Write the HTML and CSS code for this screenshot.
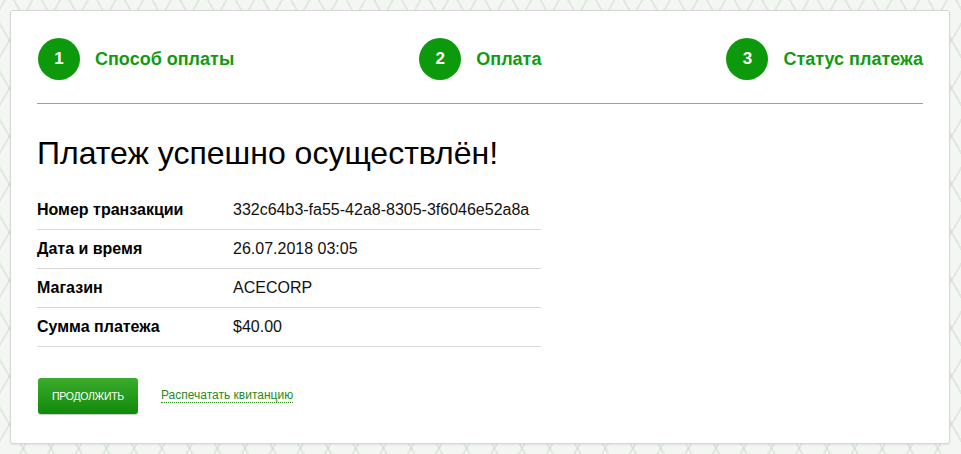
FILE: index.html
```html
<!DOCTYPE html>
<html lang="ru">
<head>
    <meta charset="UTF-8">
    <title>Статус платежа</title>
    <link rel="stylesheet" href="styles.css">
</head>
<body>
    <div class="card">
        <ul class="steps">
            <li><span class="num">1</span> Способ оплаты</li>
            <li><span class="num">2</span> Оплата</li>
            <li><span class="num">3</span> Статус платежа</li>
        </ul>

        <h1>Платеж успешно осуществлён!</h1>

        <table class="details">
            <tr><th>Номер транзакции</th><td>332c64b3-fa55-42a8-8305-3f6046e52a8a</td></tr>
            <tr><th>Дата и время</th><td>26.07.2018 03:05</td></tr>
            <tr><th>Магазин</th><td>ACECORP</td></tr>
            <tr><th>Сумма платежа</th><td>$40.00</td></tr>
        </table>

        <div class="actions">
            <button type="button">Продолжить</button>
            <a href="#" class="print">Распечатать квитанцию</a>
        </div>
    </div>
</body>
</html>
```

FILE: styles.css
```css
body {
    margin: 0;
    padding: 10px 11px 10px 10px;
    font-family: 'Liberation Sans', Arial, sans-serif;
    color: #000;
    background-color: #f4f6f3;
    background-image:
        repeating-linear-gradient(60deg, transparent 0 22px, rgba(200, 215, 200, 0.45) 22px 24px),
        repeating-linear-gradient(-60deg, transparent 0 22px, rgba(200, 215, 200, 0.45) 22px 24px);
}
.card {
    background: #fff;
    border: 1px solid #d6d6d6;
    border-radius: 3px;
    box-shadow: 0 1px 2px rgba(0, 0, 0, 0.08);
    padding: 27px 26px 29px 26px;
    height: 376px;
}
.steps {
    list-style: none;
    margin: 0;
    padding: 0 0 23px 0;
    display: flex;
    justify-content: space-between;
    border-bottom: 1px solid #a0a0a0;
}
.steps li {
    display: flex;
    align-items: center;
    gap: 15px;
    color: #109b10;
    font-size: 18px;
    font-weight: bold;
}
.num {
    width: 42px;
    height: 42px;
    border-radius: 50%;
    background: #0c9a0c;
    color: #fff;
    display: flex;
    align-items: center;
    justify-content: center;
    font-size: 17px;
    margin-left: 1px;
}
h1 {
    font-size: 32px;
    font-weight: normal;
    margin: 31px 0 19px 0;
}
.details {
    border-collapse: collapse;
    width: 504px;
}
.details th,
.details td {
    text-align: left;
    font-size: 16px;
    line-height: 18px;
    padding: 10px 0 10px 0;
    border-bottom: 1px solid #d8d8d8;
}
.details th {
    width: 196px;
}
.details td {
    color: #111;
}
.actions {
    display: flex;
    align-items: center;
    gap: 23px;
    margin-top: 31px;
}
button {
    width: 100px;
    height: 36px;
    margin-left: 1px;
    border: none;
    border-radius: 3px;
    background: linear-gradient(#3bab2c, #118a0b);
    color: #fff;
    font-family: inherit;
    font-size: 10.5px;
    text-transform: uppercase;
    letter-spacing: -0.3px;
    box-shadow: 0 1px 1px rgba(0, 0, 0, 0.2);
    cursor: pointer;
}
.print {
    color: #2a8a1a;
    font-size: 12px;
    text-decoration: none;
    border-bottom: 1px dotted #2a8a1a;
    line-height: 13px;
}
```
